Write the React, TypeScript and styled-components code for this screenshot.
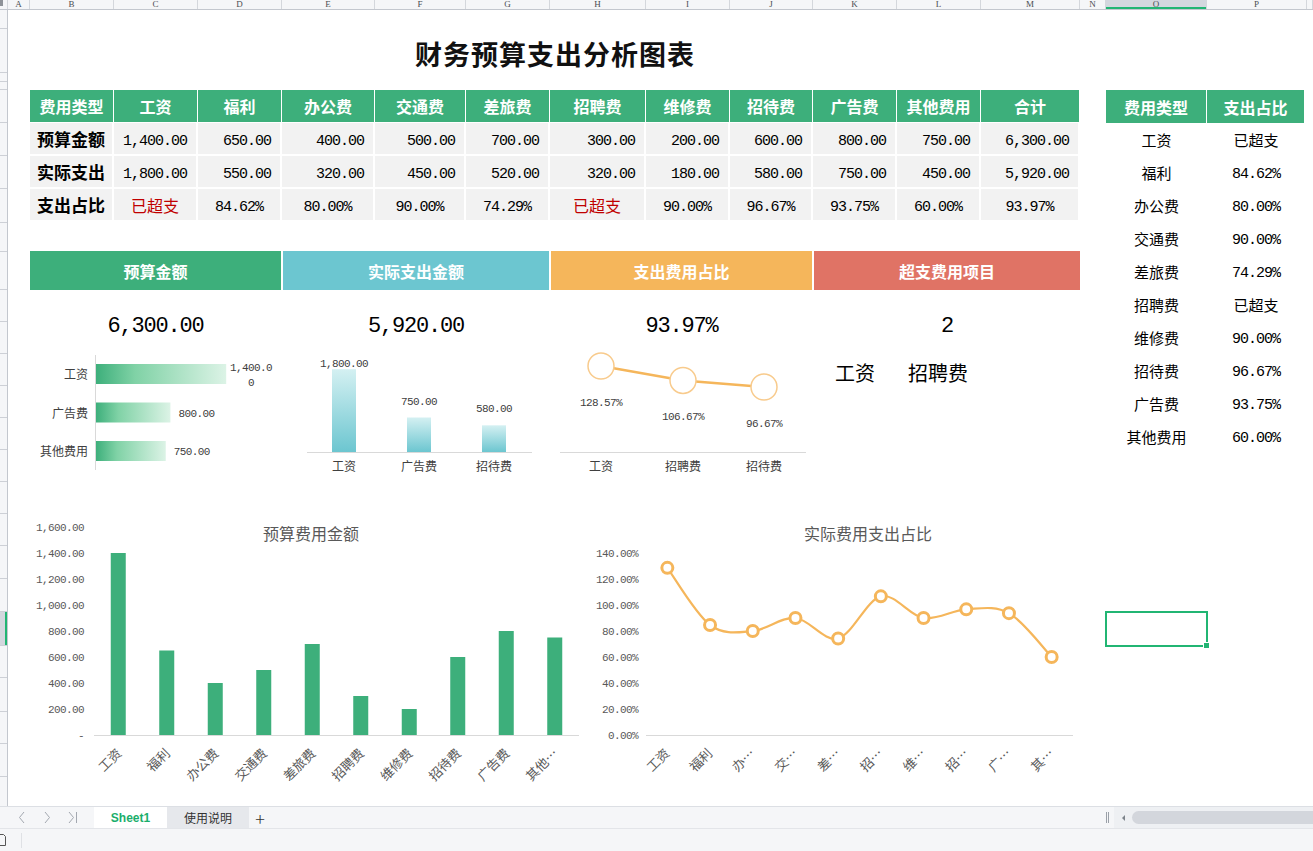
import React from 'react'
import styled, { createGlobalStyle } from 'styled-components'

const GREEN = '#3daf7b'
const TEAL = '#6cc6d0'
const ORANGE = '#f5b65b'
const CORAL = '#e07365'
const SELECT = '#21b573'
const SANS = `"Noto Sans CJK SC", "Noto Sans", sans-serif`
const MONO = `"Liberation Mono", "Noto Sans CJK SC", monospace`

type Item = { name: string; short: string; budget: number; actual: number }

const items: Item[] = [
  { name: '工资', short: '工资', budget: 1400, actual: 1800 },
  { name: '福利', short: '福利', budget: 650, actual: 550 },
  { name: '办公费', short: '办…', budget: 400, actual: 320 },
  { name: '交通费', short: '交…', budget: 500, actual: 450 },
  { name: '差旅费', short: '差…', budget: 700, actual: 520 },
  { name: '招聘费', short: '招…', budget: 300, actual: 320 },
  { name: '维修费', short: '维…', budget: 200, actual: 180 },
  { name: '招待费', short: '招…', budget: 600, actual: 580 },
  { name: '广告费', short: '广…', budget: 800, actual: 750 },
  { name: '其他费用', short: '其…', budget: 750, actual: 450 },
]

const fmt = (n: number) =>
  n.toLocaleString('en-US', { minimumFractionDigits: 2, maximumFractionDigits: 2 })
const ratio = (it: Item) => it.actual / it.budget
const pct = (r: number) => (r * 100).toFixed(2) + '%'
const isOver = (it: Item) => it.actual > it.budget
const totalBudget = items.reduce((s, it) => s + it.budget, 0)
const totalActual = items.reduce((s, it) => s + it.actual, 0)
const overItems = items.filter(isOver)

// column letters and widths; the last one is the sliver past P
const columns = [
  ['A', 22], ['B', 84], ['C', 84], ['D', 84], ['E', 93], ['F', 91], ['G', 84],
  ['H', 96], ['I', 84], ['J', 83], ['K', 84], ['L', 84], ['M', 99], ['N', 26],
  ['O', 101], ['P', 100], ['', 6],
] as const

const rowHeights = [
  19, 44, 9, 8, 33, 33, 33, 34, 29, 38, 32, 32, 32, 32, 32, 32, 32, 32, 33, 33, 34, 32, 34,
  32, 33, 33,
]
const selectedRow = 20

const GlobalStyle = createGlobalStyle`
  html, body { margin: 0; padding: 0; background: #fff; }
  body { font-family: ${SANS}; overflow: hidden; }
`

const Screen = styled.div`
  width: 1313px;
  height: 851px;
  display: flex;
  flex-direction: column;
  overflow: hidden;
  background: #fff;
`

const ColHeader = styled.div`
  height: 10px;
  display: flex;
  background: #f5f6f8;
  border-bottom: 1px solid #c3c7ce;
  box-sizing: border-box;
  overflow: hidden;
  flex-shrink: 0;
`

const Corner = styled.div`
  width: 8px;
  flex-shrink: 0;
  border-right: 1px solid #d4d7dc;
  box-sizing: border-box;
  &::before {
    content: '';
    display: block;
    width: 3px;
    height: 6px;
    background: #8f9399;
  }
`

const ColCell = styled.div<{ $w: number; $active?: boolean }>`
  width: ${p => p.$w}px;
  flex-shrink: 0;
  box-sizing: border-box;
  border-right: 1px solid #d4d7dc;
  display: flex;
  justify-content: center;
  align-items: center;
  font-family: "Liberation Serif", serif;
  font-size: 9px;
  line-height: 9px;
  color: #4a4d52;
  background: ${p => (p.$active ? '#d3d7de' : 'transparent')};
  box-shadow: ${p => (p.$active ? `inset 0 -2px 0 ${SELECT}` : 'none')};
`

const Body = styled.div`
  flex: 1;
  display: flex;
  overflow: hidden;
`

const RowHeader = styled.div`
  width: 8px;
  flex-shrink: 0;
  background: #f5f6f8;
  border-right: 1px solid #c3c7ce;
  box-sizing: border-box;
  display: flex;
  flex-direction: column;
`

const RowCell = styled.div<{ $h: number; $active?: boolean }>`
  height: ${p => p.$h}px;
  flex-shrink: 0;
  box-sizing: border-box;
  border-bottom: 1px solid #cdd0d6;
  background: ${p => (p.$active ? '#d3d7de' : 'transparent')};
  box-shadow: ${p => (p.$active ? `inset -2px 0 0 ${SELECT}` : 'none')};
`

const Sheet = styled.div`
  flex: 1;
  display: flex;
  padding-left: 22px;
`

const LeftPane = styled.div`
  width: 1050px;
  display: flex;
  flex-direction: column;
`

const Title = styled.div`
  height: 80px;
  box-sizing: border-box;
  padding-top: 6px;
  display: flex;
  align-items: center;
  justify-content: center;
  font-size: 27px;
  font-weight: 700;
  color: #111;
  letter-spacing: 1px;
`

const DataTable = styled.div`
  display: grid;
  grid-template-columns: 84px 84px 84px 93px 91px 84px 96px 84px 83px 84px 84px 99px;
`

type CellKind = 'head' | 'label' | 'num' | 'pct' | 'over'
const isMono = (k: CellKind) => k === 'num' || k === 'pct'

const Cell = styled.div<{ $kind: CellKind }>`
  height: 33px;
  box-sizing: border-box;
  border-right: ${p => (p.$kind === 'head' ? 1 : 2)}px solid #fff;
  border-bottom: ${p => (p.$kind === 'head' ? 1 : 2)}px solid #fff;
  display: flex;
  align-items: center;
  justify-content: ${p => (p.$kind === 'num' ? 'flex-end' : 'center')};
  padding-right: ${p => (p.$kind === 'num' ? '9px' : '0')};
  padding-top: ${p => (isMono(p.$kind) ? '5px' : '0')};
  background: ${p => (p.$kind === 'head' ? GREEN : '#f2f2f2')};
  color: ${p => (p.$kind === 'head' ? '#fff' : p.$kind === 'over' ? '#c00000' : '#000')};
  font-family: ${p => (isMono(p.$kind) ? MONO : SANS)};
  font-size: ${p => (isMono(p.$kind) ? 15 : p.$kind === 'label' ? 17 : 16)}px;
  letter-spacing: ${p => (isMono(p.$kind) ? '-1px' : '0')};
  font-weight: ${p => (p.$kind === 'head' || p.$kind === 'label' ? 700 : 400)};
`

const KpiGrid = styled.div`
  margin-top: 29px;
  display: grid;
  grid-template-columns: 251px 266px 261px 266px;
  column-gap: 2px;
`

const Card = styled.div`
  display: flex;
  flex-direction: column;
`

const CardHead = styled.div<{ $bg: string }>`
  height: 39px;
  background: ${p => p.$bg};
  color: #fff;
  font-size: 16px;
  font-weight: 700;
  display: flex;
  align-items: center;
  justify-content: center;
`

const KpiValue = styled.div`
  margin-top: 23px;
  height: 27px;
  line-height: 27px;
  text-align: center;
  font-family: ${MONO};
  font-size: 22px;
  letter-spacing: -1.2px;
  color: #000;
`

const ChartBox = styled.svg`
  display: block;
  margin-top: 5px;
`

const OverList = styled.div`
  margin-top: 19px;
  display: flex;
  gap: 33px;
  padding-left: 21px;
  line-height: 28px;
  font-size: 20px;
  color: #000;
`

const ChartRow = styled.div`
  margin-top: 30px;
  display: flex;
`

const SvgLabel = styled.text<{ $size?: number; $mono?: boolean; $color?: string }>`
  font-family: ${p => (p.$mono ? MONO : SANS)};
  font-size: ${p => p.$size ?? 12}px;
  fill: ${p => p.$color ?? '#595959'};
  letter-spacing: ${p => (p.$mono ? '-0.6px' : '0')};
`

const RightPane = styled.div`
  margin-left: 26px;
  width: 199px;
  padding-top: 80px;
  display: flex;
  flex-direction: column;
`

const SideTable = styled.div`
  display: grid;
  grid-template-columns: 101px 98px;
`

const SideCell = styled.div<{ $head?: boolean; $mono?: boolean }>`
  height: 33px;
  box-sizing: border-box;
  display: flex;
  align-items: center;
  justify-content: center;
  padding-top: ${p => (p.$mono ? '4px' : '0')};
  background: ${p => (p.$head ? GREEN : 'transparent')};
  border-right: ${p => (p.$head ? '1px solid #fff' : 'none')};
  color: ${p => (p.$head ? '#fff' : '#000')};
  font-weight: ${p => (p.$head ? 700 : 400)};
  font-family: ${p => (p.$mono ? MONO : SANS)};
  font-size: ${p => (p.$head ? 16 : 15)}px;
  letter-spacing: ${p => (p.$mono ? '-1px' : '0')};
`

const SelectedCell = styled.div`
  position: relative;
  margin-top: 158px;
  margin-left: -1px;
  width: 103px;
  height: 36px;
  box-sizing: border-box;
  border: 2px solid ${SELECT};
`

const FillHandle = styled.div`
  position: absolute;
  right: -4px;
  bottom: -4px;
  width: 5px;
  height: 5px;
  background: ${SELECT};
  border: 1px solid #fff;
`

const TabBar = styled.div`
  height: 22px;
  flex-shrink: 0;
  box-sizing: border-box;
  border-top: 1px solid #dcdfe4;
  background: #f5f6f8;
  display: flex;
  align-items: stretch;
`

const NavIcons = styled.svg`
  display: block;
  flex-shrink: 0;
`

const SheetTab = styled.div<{ $w: number; $active?: boolean }>`
  width: ${p => p.$w}px;
  flex-shrink: 0;
  display: flex;
  align-items: center;
  justify-content: center;
  background: ${p => (p.$active ? '#fff' : '#e6e8ec')};
  color: ${p => (p.$active ? '#1aae6b' : '#333')};
  font-weight: ${p => (p.$active ? 700 : 400)};
  font-family: ${p => (p.$active ? `"Liberation Sans", sans-serif` : SANS)};
  font-size: 12px;
`

const AddTab = styled.div`
  width: 22px;
  display: flex;
  align-items: center;
  justify-content: center;
  font-size: 18px;
  font-weight: 300;
  color: #333;
  line-height: 1;
`

const Spacer = styled.div`
  flex: 1;
`

const Grip = styled.div`
  width: 14px;
  display: flex;
  align-items: center;
  justify-content: center;
  &::before {
    content: '';
    width: 1px;
    height: 11px;
    border-left: 1px solid #9aa0a8;
    border-right: 1px solid #9aa0a8;
  }
`

const ScrollTrack = styled.div`
  width: 199px;
  display: flex;
  align-items: center;
  background: #eef0f3;
`

const ScrollArrow = styled.div`
  width: 18px;
  display: flex;
  justify-content: center;
  &::before {
    content: '';
    border-top: 3px solid transparent;
    border-bottom: 3px solid transparent;
    border-right: 3px solid #7d838b;
  }
`

const ScrollThumb = styled.div`
  flex: 1;
  height: 13px;
  border-radius: 7px 0 0 7px;
  background: #d3d6dc;
`

const StatusBar = styled.div`
  height: 23px;
  flex-shrink: 0;
  box-sizing: border-box;
  border-top: 1px solid #e3e5e9;
  background: #f5f6f8;
  display: flex;
  align-items: center;
`

const StatusIcon = styled.div`
  width: 22px;
  height: 15px;
  box-sizing: border-box;
  border-right: 1px solid #dfe1e5;
  display: flex;
  align-items: center;
`

const TopBudget = () => {
  const top = [...items].sort((a, b) => b.budget - a.budget).slice(0, 3)
  return (
    <ChartBox width={251} height={135}>
      <defs>
        <linearGradient id="budgetGrad" x1="0" y1="0" x2="1" y2="0">
          <stop offset="0" stopColor="#3daf7b" />
          <stop offset="0.3" stopColor="#80d2a6" />
          <stop offset="1" stopColor="#dcf3e6" />
        </linearGradient>
      </defs>
      <line x1={65.5} y1={10} x2={65.5} y2={125} stroke="#d9d9d9" />
      {top.map((it, i) => {
        const y = 19 + i * 38.5
        const w = it.budget * 0.093
        const label = fmt(it.budget)
        const wrap = 66 + w > 180
        return (
          <g key={it.name}>
            <rect x={66} y={y} width={w} height={20} fill="url(#budgetGrad)" />
            <SvgLabel x={58} y={y + 15} textAnchor="end" $color="#404040">
              {it.name}
            </SvgLabel>
            {wrap ? (
              <>
                <SvgLabel x={221} y={y + 7} textAnchor="middle" $mono $size={11} $color="#404040">
                  {label.slice(0, 7)}
                </SvgLabel>
                <SvgLabel x={221} y={y + 22} textAnchor="middle" $mono $size={11} $color="#404040">
                  {label.slice(7)}
                </SvgLabel>
              </>
            ) : (
              <SvgLabel x={66 + w + 8} y={y + 14} $mono $size={11} $color="#404040">
                {label}
              </SvgLabel>
            )}
          </g>
        )
      })}
    </ChartBox>
  )
}

const TopActual = () => {
  const top = [...items].sort((a, b) => b.actual - a.actual).slice(0, 3)
  const cx = [61, 136, 211]
  const base = 107
  return (
    <ChartBox width={266} height={135}>
      <defs>
        <linearGradient id="actualGrad" x1="0" y1="0" x2="0" y2="1">
          <stop offset="0" stopColor="#d4f0f2" />
          <stop offset="1" stopColor="#6cc6d0" />
        </linearGradient>
      </defs>
      {top.map((it, i) => {
        const h = it.actual * 0.046
        const top = base - h
        return (
          <g key={it.name}>
            <rect x={cx[i] - 12} y={top} width={24} height={h} fill="url(#actualGrad)" />
            <SvgLabel x={cx[i]} y={Math.max(top - 13, 22)} textAnchor="middle" $mono $size={11} $color="#404040">
              {fmt(it.actual)}
            </SvgLabel>
            <SvgLabel x={cx[i]} y={126} textAnchor="middle" $color="#404040">
              {it.name}
            </SvgLabel>
          </g>
        )
      })}
      <line x1={24} y1={base + 0.5} x2={249} y2={base + 0.5} stroke="#d9d9d9" />
    </ChartBox>
  )
}

const TopRatio = () => {
  const top = [...items].sort((a, b) => ratio(b) - ratio(a)).slice(0, 3)
  const cx = [50, 132, 213]
  const pts = top.map((it, i) => [cx[i], 21 + (1.2857 - ratio(it)) * 65.8] as const)
  return (
    <ChartBox width={261} height={135}>
      <polyline
        points={pts.map(p => p.join(',')).join(' ')}
        fill="none"
        stroke={ORANGE}
        strokeWidth={2.5}
      />
      {top.map((it, i) => (
        <g key={it.name}>
          <circle cx={pts[i][0]} cy={pts[i][1]} r={13} fill="#fff" stroke="#f8cb8d" strokeWidth={1.5} />
          <SvgLabel x={cx[i]} y={pts[i][1] + 40} textAnchor="middle" $mono $size={11} $color="#404040">
            {pct(ratio(it))}
          </SvgLabel>
          <SvgLabel x={cx[i]} y={126} textAnchor="middle" $color="#404040">
            {it.name}
          </SvgLabel>
        </g>
      ))}
      <line x1={9} y1={107.5} x2={255} y2={107.5} stroke="#d9d9d9" />
    </ChartBox>
  )
}

const BudgetChart = () => {
  const x0 = 64
  const step = 48.5
  const base = 225
  const ticks = [0, 200, 400, 600, 800, 1000, 1200, 1400, 1600]
  return (
    <svg width={550} height={290} style={{ display: 'block' }}>
      <SvgLabel x={281} y={30} textAnchor="middle" $size={16}>
        预算费用金额
      </SvgLabel>
      {ticks.map(v => (
        <SvgLabel key={v} x={54} y={base - v * 0.13 + 4} textAnchor="end" $mono $size={11}>
          {v === 0 ? '-' : fmt(v)}
        </SvgLabel>
      ))}
      {items.map((it, i) => {
        const cx = x0 + step * (i + 0.5)
        const h = it.budget * 0.13
        return (
          <g key={it.name}>
            <rect x={cx - 7.5} y={base - h} width={15} height={h} fill={GREEN} />
            <SvgLabel
              transform={`translate(${cx + 1},${241}) rotate(-45)`}
              textAnchor="end"
              dy="0.35em"
              $size={13}
            >
              {i === 9 ? '其他…' : it.name}
            </SvgLabel>
          </g>
        )
      })}
      <line x1={x0} y1={base + 0.5} x2={x0 + step * 10} y2={base + 0.5} stroke="#d9d9d9" />
    </svg>
  )
}

const smooth = (pts: [number, number][]) => {
  let d = `M${pts[0][0]},${pts[0][1]}`
  for (let i = 0; i < pts.length - 1; i++) {
    const p0 = pts[i - 1] || pts[i]
    const p1 = pts[i]
    const p2 = pts[i + 1]
    const p3 = pts[i + 2] || p2
    const c1x = p1[0] + (p2[0] - p0[0]) / 6
    const c1y = p1[1] + (p2[1] - p0[1]) / 6
    const c2x = p2[0] - (p3[0] - p1[0]) / 6
    const c2y = p2[1] - (p3[1] - p1[1]) / 6
    d += ` C${c1x},${c1y} ${c2x},${c2y} ${p2[0]},${p2[1]}`
  }
  return d
}

const RatioChart = () => {
  const x0 = 66
  const step = 42.7
  const base = 225
  const ticks = [0, 20, 40, 60, 80, 100, 120, 140]
  const pts = items.map(
    (it, i) => [x0 + step * (i + 0.5), base - ratio(it) * 130] as [number, number]
  )
  return (
    <svg width={500} height={290} style={{ display: 'block' }}>
      <SvgLabel x={288} y={30} textAnchor="middle" $size={16}>
        实际费用支出占比
      </SvgLabel>
      {ticks.map(v => (
        <SvgLabel key={v} x={58} y={base - v * 1.3 + 4} textAnchor="end" $mono $size={11}>
          {v.toFixed(2) + '%'}
        </SvgLabel>
      ))}
      <line x1={x0} y1={base + 0.5} x2={x0 + step * 10} y2={base + 0.5} stroke="#d9d9d9" />
      <path d={smooth(pts)} fill="none" stroke={ORANGE} strokeWidth={2.2} />
      {pts.map((p, i) => (
        <g key={items[i].name}>
          <circle cx={p[0]} cy={p[1]} r={5.5} fill="#fff" stroke={ORANGE} strokeWidth={3} />
          <SvgLabel
            transform={`translate(${p[0]},${241}) rotate(-45)`}
            textAnchor="end"
            dy="0.35em"
            $size={13}
          >
            {items[i].short}
          </SvgLabel>
        </g>
      ))}
    </svg>
  )
}

const App = () => {
  return (
    <Screen>
      <GlobalStyle />
      <ColHeader>
        <Corner />
        {columns.map(([l, w], i) => (
          <ColCell key={i} $w={w} $active={l === 'O'}>
            {l}
          </ColCell>
        ))}
      </ColHeader>
      <Body>
        <RowHeader>
          {rowHeights.map((h, i) => (
            <RowCell key={i} $h={h} $active={i === selectedRow} />
          ))}
        </RowHeader>
        <Sheet>
          <LeftPane>
            <Title>财务预算支出分析图表</Title>
            <DataTable>
              <Cell $kind="head">费用类型</Cell>
              {items.map(it => (
                <Cell key={it.name} $kind="head">
                  {it.name}
                </Cell>
              ))}
              <Cell $kind="head">合计</Cell>

              <Cell $kind="label">预算金额</Cell>
              {items.map(it => (
                <Cell key={it.name} $kind="num">
                  {fmt(it.budget)}
                </Cell>
              ))}
              <Cell $kind="num">{fmt(totalBudget)}</Cell>

              <Cell $kind="label">实际支出</Cell>
              {items.map(it => (
                <Cell key={it.name} $kind="num">
                  {fmt(it.actual)}
                </Cell>
              ))}
              <Cell $kind="num">{fmt(totalActual)}</Cell>

              <Cell $kind="label">支出占比</Cell>
              {items.map(it =>
                isOver(it) ? (
                  <Cell key={it.name} $kind="over">
                    已超支
                  </Cell>
                ) : (
                  <Cell key={it.name} $kind="pct">
                    {pct(ratio(it))}
                  </Cell>
                )
              )}
              <Cell $kind="pct">{pct(totalActual / totalBudget)}</Cell>
            </DataTable>

            <KpiGrid>
              <Card>
                <CardHead $bg={GREEN}>预算金额</CardHead>
                <KpiValue>{fmt(totalBudget)}</KpiValue>
                <TopBudget />
              </Card>
              <Card>
                <CardHead $bg={TEAL}>实际支出金额</CardHead>
                <KpiValue>{fmt(totalActual)}</KpiValue>
                <TopActual />
              </Card>
              <Card>
                <CardHead $bg={ORANGE}>支出费用占比</CardHead>
                <KpiValue>{pct(totalActual / totalBudget)}</KpiValue>
                <TopRatio />
              </Card>
              <Card>
                <CardHead $bg={CORAL}>超支费用项目</CardHead>
                <KpiValue>{overItems.length}</KpiValue>
                <OverList>
                  {overItems.map(it => (
                    <span key={it.name}>{it.name}</span>
                  ))}
                </OverList>
              </Card>
            </KpiGrid>

            <ChartRow>
              <BudgetChart />
              <RatioChart />
            </ChartRow>
          </LeftPane>

          <RightPane>
            <SideTable>
              <SideCell $head>费用类型</SideCell>
              <SideCell $head>支出占比</SideCell>
              {items.map(it => (
                <React.Fragment key={it.name}>
                  <SideCell>{it.name}</SideCell>
                  <SideCell $mono={!isOver(it)}>{isOver(it) ? '已超支' : pct(ratio(it))}</SideCell>
                </React.Fragment>
              ))}
            </SideTable>
            <SelectedCell>
              <FillHandle />
            </SelectedCell>
          </RightPane>
        </Sheet>
      </Body>

      <TabBar>
        <NavIcons width={94} height={21} viewBox="0 0 94 21">
          <path d="M24 5 L19.5 10.5 L24 16" stroke="#a3a8b0" fill="none" />
          <path d="M45 5 L49.5 10.5 L45 16" stroke="#a3a8b0" fill="none" />
          <path d="M69 5 L73.5 10.5 L69 16 M76.5 5 V16" stroke="#a3a8b0" fill="none" />
        </NavIcons>
        <SheetTab $w={73} $active>
          Sheet1
        </SheetTab>
        <SheetTab $w={82}>使用说明</SheetTab>
        <AddTab>+</AddTab>
        <Spacer />
        <Grip />
        <ScrollTrack>
          <ScrollArrow />
          <ScrollThumb />
        </ScrollTrack>
      </TabBar>

      <StatusBar>
        <StatusIcon>
          <svg width={6} height={14} viewBox="0 0 6 14">
            <path d="M-2 1.5 H3.5 L5.5 3.5 V12.5 H-2" stroke="#555" fill="none" />
          </svg>
        </StatusIcon>
      </StatusBar>
    </Screen>
  )
}

export default App
